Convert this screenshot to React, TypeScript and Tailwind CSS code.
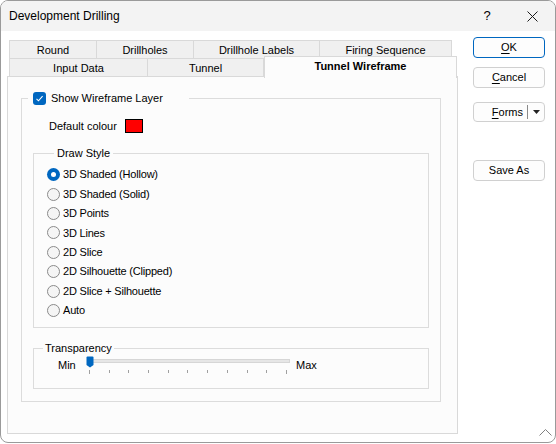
import React, { useState } from 'react';

const font = { fontFamily: '"Liberation Sans", Arial, sans-serif' };

const drawStyles = [
  '3D Shaded (Hollow)',
  '3D Shaded (Solid)',
  '3D Points',
  '3D Lines',
  '2D Slice',
  '2D Silhouette (Clipped)',
  '2D Slice + Silhouette',
  'Auto',
];

const Radio: React.FC<{ checked: boolean; label: string; onClick: () => void }> = ({ checked, label, onClick }) => (
  <div className="flex items-center h-[19.4px] cursor-default" onClick={onClick}>
    {checked ? (
      <span className="w-[13px] h-[13px] rounded-full bg-[#0067c0] flex items-center justify-center">
        <span className="w-[5px] h-[5px] rounded-full bg-white" />
      </span>
    ) : (
      <span className="w-[13px] h-[13px] rounded-full border border-[#8a8a8a] bg-[#f5f5f5]" />
    )}
    <span className="ml-[3px] text-[11px] text-black tracking-[-0.2px]">{label}</span>
  </div>
);

const TabBtn: React.FC<{ w: string; label: string; selected?: boolean }> = ({ w, label, selected }) => (
  <div
    className={
      selected
        ? `${w} h-[22px] -mt-[2px] -mr-[2px] bg-[#fcfcfc] border border-b-0 border-[#d9d9d9] flex items-center justify-center pb-[2px] text-[11px] font-bold text-black relative z-10`
        : `${w} h-full bg-[#f0f0f0] border border-[#d9d9d9] -ml-px first:ml-0 flex items-center justify-center pt-px text-[11px] text-black`
    }
  >
    {label}
  </div>
);

const PushBtn: React.FC<{ children: React.ReactNode; primary?: boolean; className?: string }> = ({ children, primary, className }) => (
  <button
    className={`w-[72px] h-[21px] rounded-[4px] text-[11px] text-black bg-[#fdfdfd] border ${
      primary ? 'border-[#0067c0]' : 'border-[#d0d0d0]'
    } flex items-center justify-center ${className ?? ''}`}
  >
    {children}
  </button>
);

export default function App() {
  const [style, setStyle] = useState(0);
  const [show, setShow] = useState(true);

  return (
    <div className="w-[556px] h-[444px] bg-white relative" style={font}>
      <div className="h-[443px] border border-[#9a9a9a] rounded-lg overflow-hidden flex flex-col bg-white">
        {/* title bar */}
        <div className="h-[30px] bg-[#f3f3f3] flex items-center pl-[8px] shrink-0">
          <span className="text-[12px] text-black">Development Drilling</span>
          <span className="ml-auto text-[13px] text-black w-[44px] text-center">?</span>
          <span className="w-[46px] flex items-center justify-center">
            <svg width="11" height="11" viewBox="0 0 11 11" stroke="#1a1a1a" strokeWidth="1">
              <path d="M0.5 0.5L10.5 10.5M10.5 0.5L0.5 10.5" />
            </svg>
          </span>
        </div>

        <div className="flex flex-1">
          {/* left: tabs + panel */}
          <div className="pl-[6px] pt-[9px] w-[457px]">
            <div className="pl-[2px] flex h-[19px]">
              <TabBtn w="w-[88px]" label="Round" />
              <TabBtn w="w-[98px]" label="Drillholes" />
              <TabBtn w="w-[127px]" label="Drillhole Labels" />
              <TabBtn w="w-[133px]" label="Firing Sequence" />
            </div>
            <div className="pl-[2px] flex h-[19px] -mt-px">
              <TabBtn w="w-[139px]" label="Input Data" />
              <TabBtn w="w-[117px]" label="Tunnel" />
              <TabBtn w="w-[193px]" label="Tunnel Wireframe" selected />
            </div>
            <div className="h-[358px] border border-[#d9d9d9] bg-[#fcfcfc] pl-[13px] pt-[14px] -mt-px">
              <fieldset className="w-[420px] h-[311px] border border-[#dcdcdc] pl-[11px] pr-[11px]">
                <legend className="w-[161px] -ml-[5px] pl-[5px] flex items-center h-[14px]">
                  <span
                    className="w-[13px] h-[13px] rounded-[3px] bg-[#0067c0] flex items-center justify-center"
                    onClick={() => setShow(!show)}
                  >
                    <svg width="9" height="9" viewBox="0 0 9 9" fill="none" stroke="white" strokeWidth="1.1">
                      <path d="M1.5 4.8L3.5 6.8L7.6 2.2" />
                    </svg>
                  </span>
                  <span className="ml-[5px] text-[11px] text-black">Show Wireframe Layer</span>
                </legend>

                <div className="flex items-center h-[14px] mt-[14px] pl-[16px]">
                  <span className="text-[11px] text-black">Default colour</span>
                  <span className="ml-[8px] w-[18px] h-[14px] bg-[#ff0000] border border-black" />
                </div>

                <fieldset className="mt-[13px] h-[182px] border border-[#dcdcdc] pl-[13px]">
                  <legend className="ml-[7px] px-[3px] text-[11px] text-black leading-[14px]">Draw Style</legend>
                  <div className="mt-[5px]">
                    {drawStyles.map((s, i) => (
                      <Radio key={s} label={s} checked={style === i} onClick={() => setStyle(i)} />
                    ))}
                  </div>
                </fieldset>

                <fieldset className="mt-[13px] h-[48px] border border-[#dcdcdc]">
                  <legend className="ml-[9px] px-[2px] text-[11px] text-black leading-[14px]">Transparency</legend>
                  <div className="flex items-start pl-[24px] mt-[1px]">
                    <span className="w-[28px] text-[11px] text-black leading-[14px] mt-[2px]">Min</span>
                    <div className="w-[206px] relative h-[20px]">
                      <div className="absolute left-[1px] right-[2px] top-[3px] h-[4px] bg-[#e6e6e6] border border-[#d6d6d6]" />
                      <svg className="absolute left-0 top-0" width="8" height="12" viewBox="0 0 8 12">
                        <path d="M0.5 1.5Q0.5 0.5 1.5 0.5H6.5Q7.5 0.5 7.5 1.5V9L4 11.5L0.5 9Z" fill="#0067c0" />
                      </svg>
                      <div className="absolute left-[3px] top-[14px] w-[198px] flex justify-between items-start">
                        {Array.from({ length: 11 }).map((_, i) => (
                          <span key={i} className={`w-px bg-[#a0a0a0] ${i === 0 || i === 10 ? 'h-[4px]' : 'h-[3px]'}`} />
                        ))}
                      </div>
                    </div>
                    <span className="ml-[4px] text-[11px] text-black leading-[14px] mt-[2px]">Max</span>
                  </div>
                </fieldset>
              </fieldset>
            </div>
          </div>

          {/* right buttons */}
          <div className="ml-[15px] pt-[6px] flex flex-col">
            <PushBtn primary>
              <span className="underline underline-offset-2">O</span>K
            </PushBtn>
            <PushBtn className="mt-[9px]">
              <span className="underline underline-offset-2">C</span>ancel
            </PushBtn>
            <button className="mt-[14px] w-[72px] h-[20px] rounded-[4px] bg-[#fdfdfd] border border-[#d0d0d0] flex items-center text-[11px] text-black">
              <span className="flex-1 text-right pr-[4px]">
                <span className="underline underline-offset-2">F</span>orms
              </span>
              <span className="w-px h-[14px] bg-[#8a8a8a]" />
              <span className="w-[16px] flex justify-center">
                <svg width="7" height="4" viewBox="0 0 7 4">
                  <path d="M0 0H7L3.5 4Z" fill="#222" />
                </svg>
              </span>
            </button>
            <PushBtn className="mt-[38px]">Save As</PushBtn>
          </div>
        </div>
      </div>
      <svg className="absolute left-[539px] top-[429px]" width="13" height="7" viewBox="0 0 13 7" fill="none" stroke="#808080">
        <path d="M0.5 6.5L6.5 0.5L12.5 6.5" />
      </svg>
    </div>
  );
}
